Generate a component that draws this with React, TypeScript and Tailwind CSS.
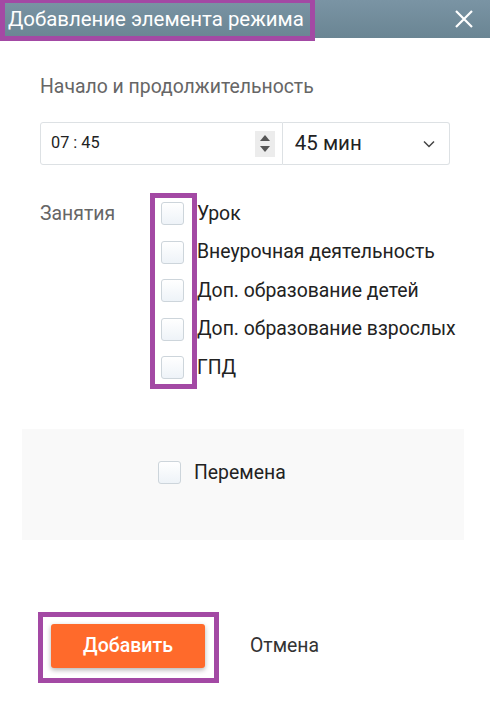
import React from "react";

// Dialog: add a schedule element
function Box() {
  return (
    <span className="block w-[23px] h-[23px] shrink-0 rounded-[3px] border border-[#cdd5db] bg-gradient-to-b from-white to-[#eef3f8]" />
  );
}

const lessons = [
  "Урок",
  "Внеурочная деятельность",
  "Доп. образование детей",
  "Доп. образование взрослых",
  "ГПД",
];

export default function App() {
  return (
    <div className="relative w-[490px] h-[710px] bg-white font-['Roboto',sans-serif] overflow-hidden">
      <div className="h-[38px] flex items-center justify-between pl-[8px] pr-[17px] bg-gradient-to-b from-[#7a94a4] to-[#6a8593]">
        <span className="text-white text-[20.4px] leading-none">
          Добавление элемента режима
        </span>
        <svg width="18" height="18" viewBox="0 0 18 18" className="text-white">
          <path d="M1 1L17 17M17 1L1 17" stroke="currentColor" strokeWidth="2.2" />
        </svg>
      </div>

      <div className="px-10">
        <div className="mt-[36px] text-[19.4px] leading-[26px] text-[#666]">
          Начало и продолжительность
        </div>

        <div className="mt-[22px] flex">
          <div className="w-[244px] h-[43px] flex items-center justify-between pl-[10px] pr-[7px] border border-[#dde1e4] rounded-l-[3px]">
            <span className="text-[16.3px] text-[#222]">07 : 45</span>
            <span className="w-[20px] h-[26px] bg-[#ececec] flex flex-col items-center justify-center gap-[5px]">
              <svg width="10" height="6" viewBox="0 0 10 6"><path d="M5 0L10 6H0Z" fill="#555" /></svg>
              <svg width="10" height="6" viewBox="0 0 10 6"><path d="M0 0H10L5 6Z" fill="#555" /></svg>
            </span>
          </div>
          <div className="w-[168px] h-[43px] flex items-center justify-between pl-[12px] pr-[14px] border border-l-0 border-[#dde1e4] rounded-r-[3px]">
            <span className="text-[20.5px] text-[#222]">45 мин</span>
            <svg width="12" height="8" viewBox="0 0 12 8"><path d="M1 1.5L6 6.5L11 1.5" fill="none" stroke="#444" strokeWidth="1.5" /></svg>
          </div>
        </div>

        <div className="mt-[37px] flex">
          <div className="w-[121px] shrink-0 h-[23px] flex items-center text-[19.4px] text-[#666]">Занятия</div>
          <div className="flex flex-col gap-[15.5px] shrink-0">
            {lessons.map((l) => (
              <div key={l} className="flex items-center gap-[13px] h-[23px]">
                <Box />
                <span className="text-[19.4px] text-[#222] whitespace-nowrap">{l}</span>
              </div>
            ))}
          </div>
        </div>
      </div>

      <div className="ml-[22px] mr-[26px] mt-[50px] h-[111px] bg-[#f9f9f9] pt-[29px] pl-[136px]">
        <div className="flex items-center gap-[13px]">
          <Box />
          <span className="text-[19.4px] text-[#222]">Перемена</span>
        </div>
      </div>

      <div className="mt-[84px] pl-[51px] flex items-center gap-[45px]">
        <button className="w-[154px] h-[44px] rounded-[3px] bg-[#ff6a2b] text-white text-[19.5px] font-medium shadow-[0_2px_5px_rgba(0,0,0,0.3)]">
          Добавить
        </button>
        <span className="text-[19.4px] text-[#333]">Отмена</span>
      </div>

      {/* annotation highlights */}
      <div className="absolute left-0 top-[-2px] w-[315px] h-[43px] border-[5px] border-[#a349a4]" />
      <div className="absolute left-[150px] top-[193px] w-[47px] h-[196px] border-[5px] border-[#a349a4]" />
      <div className="absolute left-[38px] top-[612px] w-[181px] h-[71px] border-[5px] border-[#a349a4]" />
    </div>
  );
}
